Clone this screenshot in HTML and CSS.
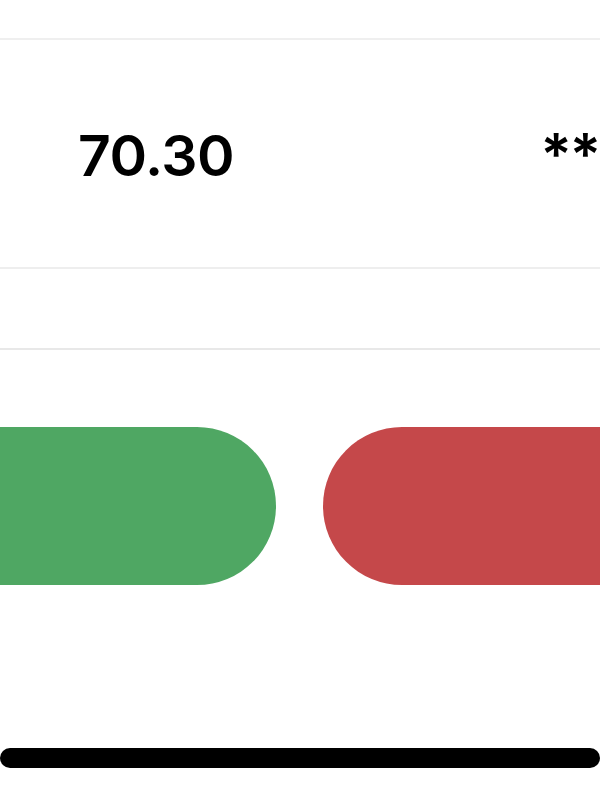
FILE: index.html
```html
<!DOCTYPE html>
<html lang="en">
<head>
    <meta charset="UTF-8">
    <meta name="viewport" content="width=device-width, initial-scale=1.0">
    <title>Price</title>
    <link rel="stylesheet" href="styles.css">
</head>
<body>
<div class="screen">
    <div class="row row-top"></div>

    <div class="row row-price">
        <div class="price">70.30</div>
        <div class="masked">**</div>
    </div>

    <div class="row row-empty"></div>

    <!-- 买入 / 卖出 -->
    <div class="actions">
        <div class="pill pill-buy"></div>
        <div class="pill pill-sell"></div>
    </div>

    <div class="home-bar"></div>
</div>
</body>
</html>
```

FILE: styles.css
```css
body {
    margin: 0;
    padding: 0;
    background-color: #ffffff;
    font-family: Inter, Roboto, "Noto Sans", sans-serif;
    overflow: hidden;
}
.screen {
    width: 600px;
    height: 800px;
    overflow: hidden;
    display: flex;
    flex-direction: column;
}
.row {
    flex: none;
}
.row-top {
    height: 38px;
    border-bottom: 2px solid #efefef;
}
.row-price {
    height: 227px;
    border-bottom: 2px solid #eeeeee;
    display: flex;
    align-items: center;
    justify-content: space-between;
    padding-left: 78px;
    white-space: nowrap;
    overflow: hidden;
}
.price {
    font-size: 57px;
    font-weight: 600;
    color: #000000;
    letter-spacing: -0.5px;
    padding-top: 4px;
}
.masked {
    font-size: 58px;
    font-weight: 600;
    color: #000000;
    margin-right: 1px;
    letter-spacing: -2px;
}
.row-empty {
    height: 79px;
    border-bottom: 2px solid #e8e8e8;
}

/* 按钮区域 */
.actions {
    display: flex;
    gap: 47px;
    margin-left: -124px;
    margin-top: 77px;
    height: 158px;
}
.pill {
    flex: none;
    width: 400px;
    height: 158px;
    border-radius: 79px;
}
.pill-buy {
    background-color: #4fa763;
}
.pill-sell {
    background-color: #c5484a;
}

.home-bar {
    flex: none;
    margin-top: 163px;
    height: 20px;
    width: 600px;
    background-color: #000000;
    border-radius: 10px;
}
```
